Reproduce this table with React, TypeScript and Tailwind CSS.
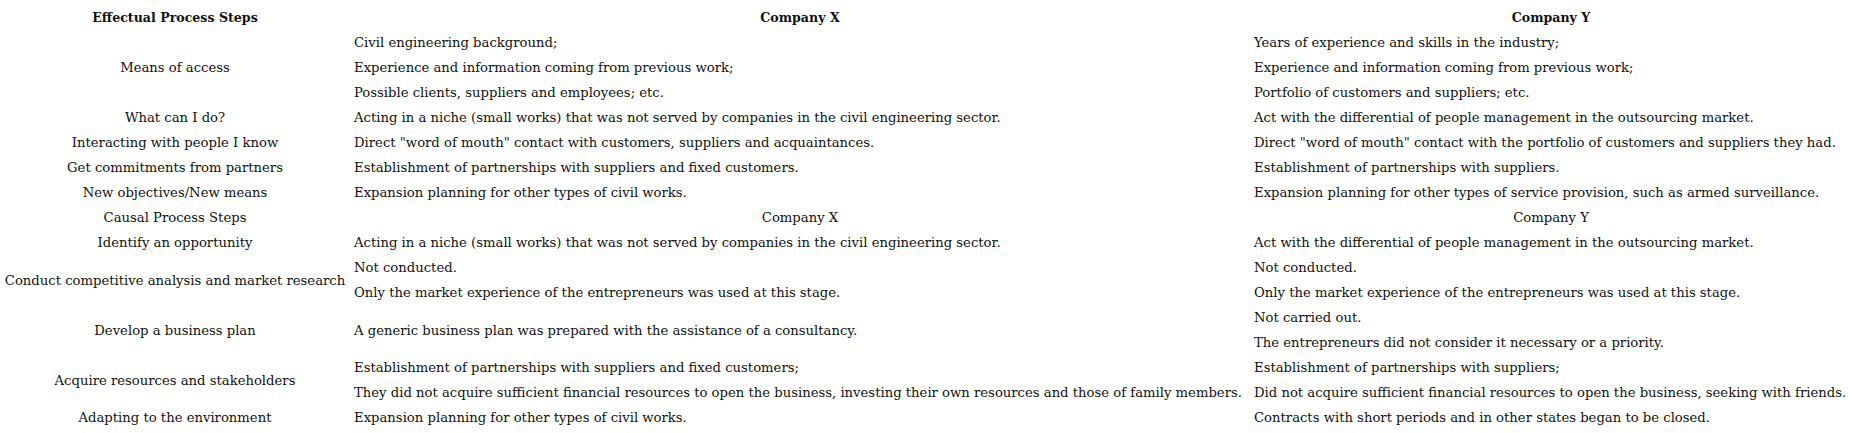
import React from "react";

type Row = {
  step: string;
  x: string[];
  y: string[];
  center?: boolean;
  bold?: boolean;
};

const rows: Row[] = [
  {
    step: "Effectual Process Steps",
    x: ["Company X"],
    y: ["Company Y"],
    center: true,
    bold: true,
  },
  {
    step: "Means of access",
    x: [
      "Civil engineering background;",
      "Experience and information coming from previous work;",
      "Possible clients, suppliers and employees; etc.",
    ],
    y: [
      "Years of experience and skills in the industry;",
      "Experience and information coming from previous work;",
      "Portfolio of customers and suppliers; etc.",
    ],
  },
  {
    step: "What can I do?",
    x: ["Acting in a niche (small works) that was not served by companies in the civil engineering sector."],
    y: ["Act with the differential of people management in the outsourcing market."],
  },
  {
    step: "Interacting with people I know",
    x: ['Direct "word of mouth" contact with customers, suppliers and acquaintances.'],
    y: ['Direct "word of mouth" contact with the portfolio of customers and suppliers they had.'],
  },
  {
    step: "Get commitments from partners",
    x: ["Establishment of partnerships with suppliers and fixed customers."],
    y: ["Establishment of partnerships with suppliers."],
  },
  {
    step: "New objectives/New means",
    x: ["Expansion planning for other types of civil works."],
    y: ["Expansion planning for other types of service provision, such as armed surveillance."],
  },
  {
    step: "Causal Process Steps",
    x: ["Company X"],
    y: ["Company Y"],
    center: true,
  },
  {
    step: "Identify an opportunity",
    x: ["Acting in a niche (small works) that was not served by companies in the civil engineering sector."],
    y: ["Act with the differential of people management in the outsourcing market."],
  },
  {
    step: "Conduct competitive analysis and market research",
    x: ["Not conducted.", "Only the market experience of the entrepreneurs was used at this stage."],
    y: ["Not conducted.", "Only the market experience of the entrepreneurs was used at this stage."],
  },
  {
    step: "Develop a business plan",
    x: ["A generic business plan was prepared with the assistance of a consultancy."],
    y: ["Not carried out.", "The entrepreneurs did not consider it necessary or a priority."],
  },
  {
    step: "Acquire resources and stakeholders",
    x: [
      "Establishment of partnerships with suppliers and fixed customers;",
      "They did not acquire sufficient financial resources to open the business, investing their own resources and those of family members.",
    ],
    y: [
      "Establishment of partnerships with suppliers;",
      "Did not acquire sufficient financial resources to open the business, seeking with friends.",
    ],
  },
  {
    step: "Adapting to the environment",
    x: ["Expansion planning for other types of civil works."],
    y: ["Contracts with short periods and in other states began to be closed."],
  },
];

function Cell({ lines, center, bold }: { lines: string[]; center?: boolean; bold?: boolean }) {
  return (
    <div
      className={`flex flex-col justify-center ${center ? "items-center" : "items-start pl-[4px]"} ${
        bold ? "font-bold text-[12.6px]" : ""
      }`}
    >
      {lines.map((l, i) => (
        <p key={i} className="leading-[25px] whitespace-nowrap">
          {l}
        </p>
      ))}
    </div>
  );
}

export default function App() {
  return (
    <div
      className="w-[1852px] h-[433px] bg-white text-[#111] text-[13.2px] pt-[5px]"
      style={{ fontFamily: '"DejaVu Serif", serif' }}
    >
      <div className="grid grid-cols-[350px_900px_1fr]">
        {rows.map((r, i) => (
          <React.Fragment key={i}>
            <div
              className={`flex items-center justify-center text-center leading-[25px] ${
                r.bold ? "font-bold text-[12.6px]" : ""
              }`}
            >
              {r.step}
            </div>
            <Cell lines={r.x} center={r.center} bold={r.bold} />
            <Cell lines={r.y} center={r.center} bold={r.bold} />
          </React.Fragment>
        ))}
      </div>
    </div>
  );
}
